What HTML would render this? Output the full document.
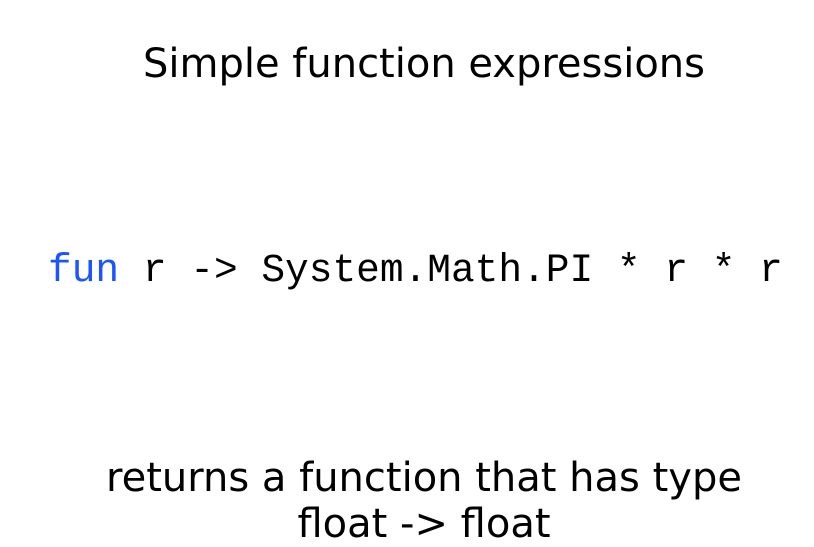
<!DOCTYPE html>
<html><head><style>
html,body{margin:0;padding:0;background:#fff;width:814px;height:546px;overflow:hidden}
.t{position:absolute;left:0;width:848px;text-align:center;font-family:"DejaVu Sans",sans-serif;font-size:40px;color:#000;white-space:nowrap}
.c{position:absolute;left:48px;top:248px;font-family:"Liberation Mono",monospace;font-size:39.5px;line-height:46px;color:#000;white-space:pre}
.k{color:#1a55ff}
</style></head><body>
<div class="t" style="top:41px;line-height:46px">Simple function expressions</div>
<div class="c"><span class="k">fun</span> r -&gt; System.Math.PI * r * r</div>
<div class="t" style="top:455px;line-height:46px">returns a function that has type<br>float -&gt; float</div>
</body></html>
